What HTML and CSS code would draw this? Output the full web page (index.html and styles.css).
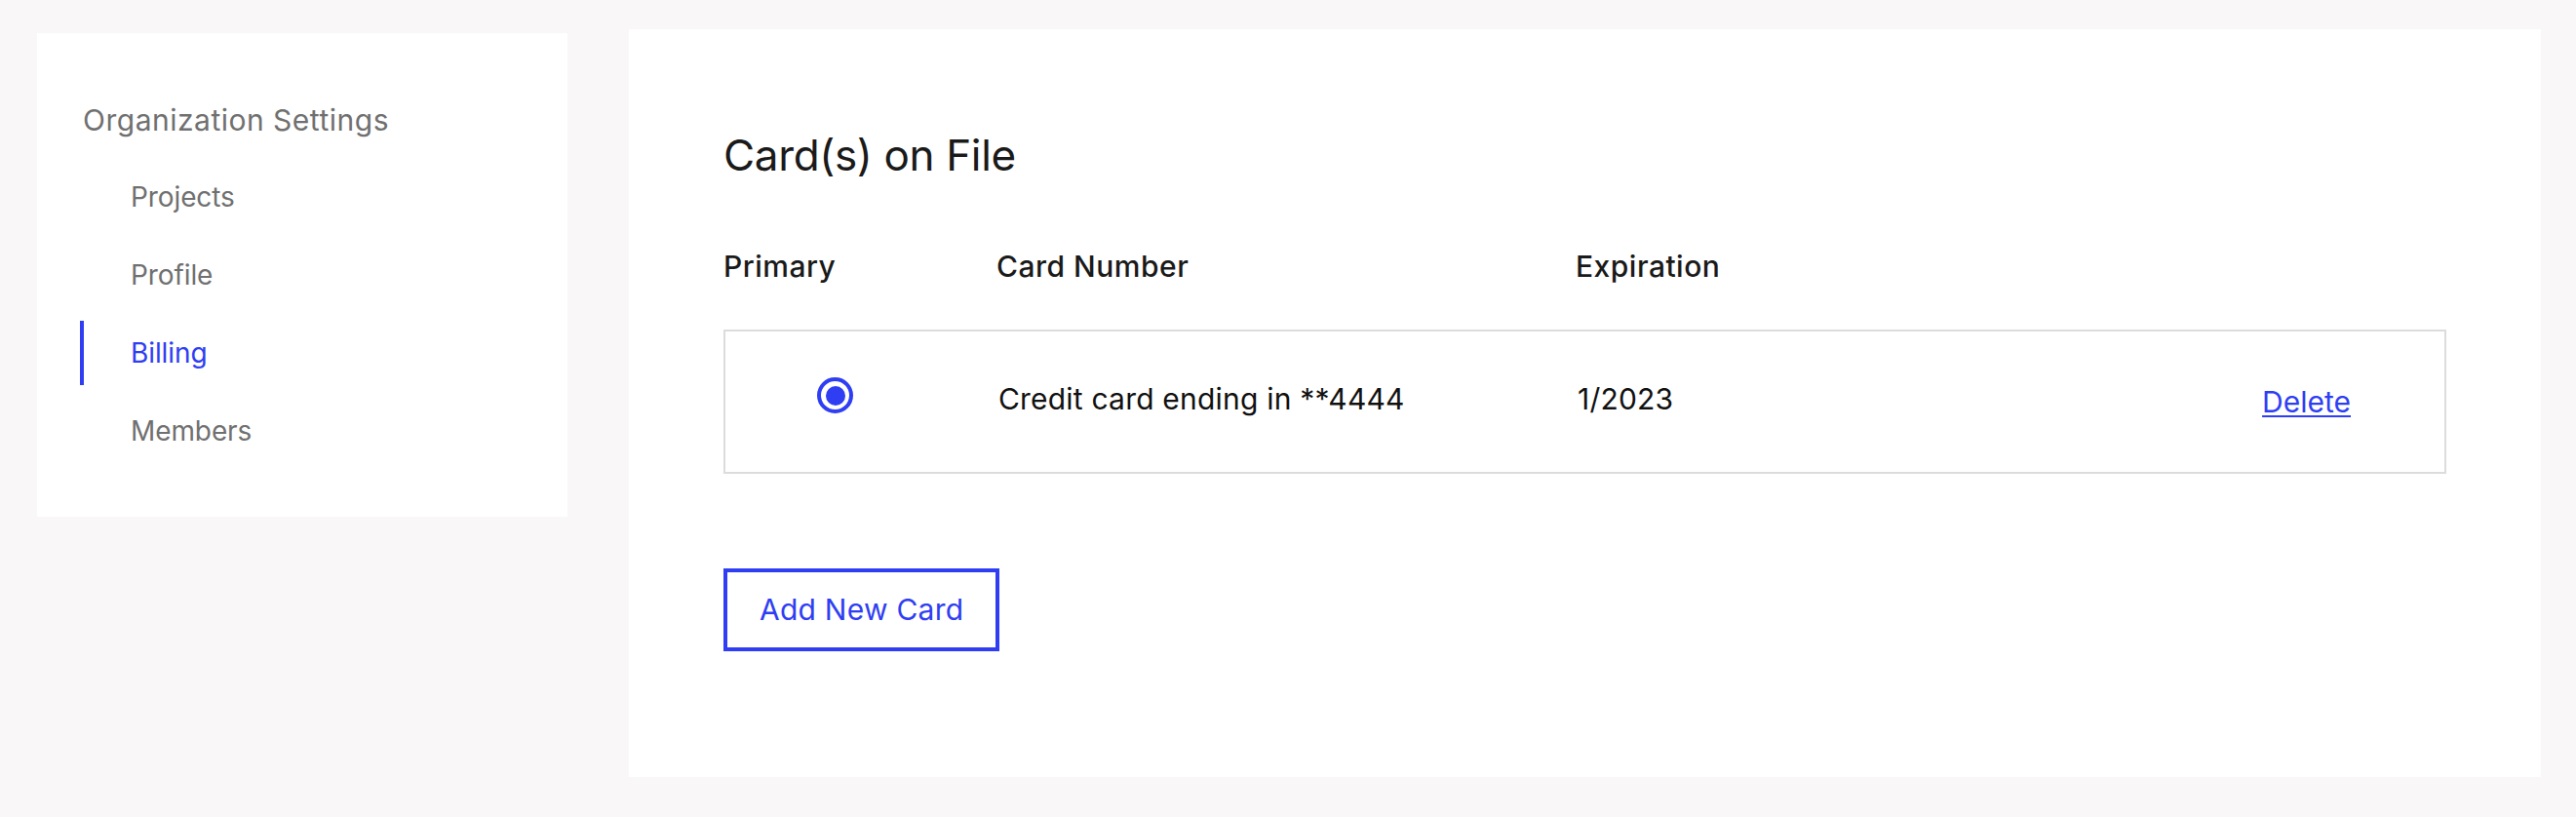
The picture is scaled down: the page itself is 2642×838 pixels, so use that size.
FILE: index.html
```html
<!DOCTYPE html>
<html lang="en">
<head>
<meta charset="utf-8">
<title>Billing – Organization Settings</title>
<link rel="stylesheet" href="styles.css">
</head>
<body>
<div class="page">
  <aside class="sidebar">
    <h2 class="sidebar-title">Organization Settings</h2>
    <nav class="nav">
      <a class="nav-item" href="#">Projects</a>
      <a class="nav-item" href="#">Profile</a>
      <a class="nav-item active" href="#">Billing</a>
      <a class="nav-item" href="#">Members</a>
    </nav>
  </aside>
  <main class="content">
    <h1 class="title">Card(s) on File</h1>
    <div class="cards-header">
      <div class="col-head">Primary</div>
      <div class="col-head">Card Number</div>
      <div class="col-head">Expiration</div>
      <div class="col-head"></div>
    </div>
    <div class="card-row">
      <div class="cell-radio"><span class="radio"></span></div>
      <div class="cell">Credit card ending in **4444</div>
      <div class="cell">1/2023</div>
      <div class="cell-action"><a class="delete-link" href="#">Delete</a></div>
    </div>
    <button class="add-btn" type="button">Add New Card</button>
  </main>
</div>
</body>
</html>
```
FILE: styles.css
```css
* { box-sizing: border-box; }

html, body {
  margin: 0;
  padding: 0;
}

body {
  background: #f9f7f8;
  font-family: Inter, "Noto Sans", "Liberation Sans", sans-serif;
  color: #1a1a1a;
}

.page {
  display: flex;
  align-items: flex-start;
  padding: 30px 36px 41px 38px;
  gap: 63px;
}

/* Sidebar */
.sidebar {
  width: 544px;
  height: 496px;
  margin-top: 4px;
  background: #ffffff;
  padding: 71px 0 0 44px;
}

.sidebar-title {
  margin: 0 0 0 3px;
  font-size: 30px;
  line-height: 36px;
  font-weight: 400;
  letter-spacing: 0.5px;
  color: #707070;
}

.nav {
  display: flex;
  flex-direction: column;
  gap: 14px;
  margin-top: 28px;
}

.nav-item {
  display: block;
  height: 66px;
  line-height: 66px;
  font-size: 28px;
  letter-spacing: -0.1px;
  color: #707070;
  text-decoration: none;
  border-left: 4px solid transparent;
  padding-left: 48px;
}

.nav-item.active {
  color: #2f3ef3;
  border-left-color: #2f3ef3;
}

/* Main content */
.content {
  flex: 1;
  height: 767px;
  background: #ffffff;
  padding: 103px 97px 0 97px;
}

.title {
  margin: 0;
  font-size: 44px;
  line-height: 53px;
  font-weight: 400;
  letter-spacing: -0.35px;
  color: #1a1a1a;
}

.cards-header,
.card-row {
  display: grid;
  grid-template-columns: 280px 594px 1fr auto;
}

.cards-header {
  margin-top: 69px;
}

.col-head {
  font-size: 30px;
  line-height: 36px;
  font-weight: 500;
  letter-spacing: 0.5px;
  color: #1a1a1a;
}

.card-row {
  margin-top: 47px;
  height: 148px;
  border: 2px solid #dcdcdc;
  align-items: start;
  padding-top: 47px;
}

.cell-radio {
  padding-left: 94px;
}

.radio {
  display: flex;
  align-items: center;
  justify-content: center;
  width: 37px;
  height: 37px;
  border: 4px solid #2f3ef3;
  border-radius: 50%;
}

.radio::after {
  content: "";
  width: 20px;
  height: 20px;
  border-radius: 50%;
  background: #2f3ef3;
}

.cell {
  margin-top: 4px;
  font-size: 30px;
  line-height: 36px;
  letter-spacing: 0.2px;
  color: #111111;
}

.cell-action {
  margin-top: 7px;
  padding-right: 96px;
  font-size: 30px;
  line-height: 36px;
}

.delete-link {
  color: #2f3ef3;
  text-decoration: underline;
  text-decoration-thickness: 2px;
  text-underline-offset: 3px;
}

.add-btn {
  display: block;
  margin-top: 97px;
  height: 85px;
  padding: 0 33px;
  background: #ffffff;
  border: 4px solid #2f3ef3;
  border-radius: 0;
  color: #2f3ef3;
  font-family: Inter, "Noto Sans", "Liberation Sans", sans-serif;
  font-size: 30px;
  line-height: 77px;
  font-weight: 400;
  letter-spacing: 0.25px;
}
```
